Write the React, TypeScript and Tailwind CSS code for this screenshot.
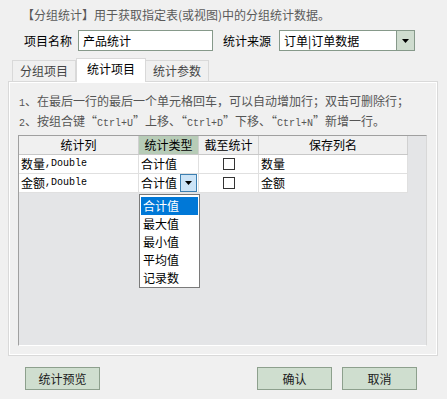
import React from "react";

const FONT = { fontFamily: '"Noto Sans CJK SC", "Liberation Sans", sans-serif' };
const MONO = { fontFamily: '"Liberation Mono", "Noto Sans CJK SC", monospace' };

function Arrow() {
  return (
    <svg width="7" height="4" viewBox="0 0 7 4">
      <path d="M0 0 H7 L3.5 4 Z" fill="#000" />
    </svg>
  );
}

function Mono({ children }: { children: React.ReactNode }) {
  return (
    <span className="text-[10px] leading-none" style={MONO}>
      {children}
    </span>
  );
}

export default function App() {
  return (
    <div
      className="relative w-[447px] h-[399px] bg-[#f0f0f0] text-[12px] text-black overflow-hidden"
      style={FONT}
    >
      {/* title */}
      <div className="pt-[8px] pl-[22px] h-[22px] leading-[14px] text-[#5a5a5a] whitespace-nowrap">
        【分组统计】用于获取指定表(或视图)中的分组统计数据。
      </div>

      {/* name / source row */}
      <div className="mt-[8px] flex items-center h-[21px] pl-[24px] text-[12px] whitespace-nowrap">
        <span className="w-[48px] leading-[21px]">项目名称</span>
        <div className="ml-[6px] w-[135px] h-[21px] bg-white border border-[#86998a] flex items-center pl-[4px]">
          产品统计
        </div>
        <span className="ml-[10px] w-[48px] leading-[21px]">统计来源</span>
        <div className="ml-[8px] w-[136px] h-[21px] bg-white border border-[#86998a] flex items-center">
          <span className="flex-1 pl-[4px]">订单|订单数据</span>
          <div className="w-[18px] h-full border-l border-[#86998a] bg-[#cfdccf] flex items-center justify-center">
            <Arrow />
          </div>
        </div>
      </div>

      {/* tabs */}
      <div className="mt-[7px] ml-[12px] flex items-end h-[23px] relative z-10">
        <div className="w-[64px] h-[21px] border border-b-0 border-[#d9d9d9] bg-[#f0f0f0] flex items-center justify-center text-[#444]">
          分组项目
        </div>
        <div className="w-[70px] h-[24px] -mb-px border border-b-0 border-[#d9d9d9] bg-white flex items-center justify-center pb-[3px]">
          统计项目
        </div>
        <div className="w-[63px] h-[21px] border border-b-0 border-l-0 border-[#d9d9d9] bg-[#f0f0f0] flex items-center justify-center text-[#444]">
          统计参数
        </div>
      </div>

      {/* panel */}
      <div className="ml-[8px] w-[430px] h-[275px] border border-[#d9d9d9] shadow-[inset_1px_1px_0_#ffffff,inset_-1px_-1px_0_#ffffff] bg-[#f0f0f0] flex flex-col">
        <div className="pt-[9px] pl-[10px] text-[#555] whitespace-nowrap">
          <div className="h-[20px] leading-[20px] flex items-center">
            <span>
              <Mono>1</Mono>、在最后一行的最后一个单元格回车，可以自动增加行；双击可删除行；
            </span>
          </div>
          <div className="h-[20px] leading-[20px] flex items-center">
            <span>
              <Mono>2</Mono>、按组合键“<Mono>Ctrl+U</Mono>”上移、“<Mono>Ctrl+D</Mono>”下移、“<Mono>Ctrl+N</Mono>”新增一行。
            </span>
          </div>
        </div>

        {/* grid */}
        <div className="mt-[4px] ml-[9px] w-[409px] h-[211px] border-t border-l border-[#a0a0a0] border-r border-b border-r-[#d8d8d8] border-b-[#ffffff] bg-[#e4e5e7]">
          <div className="flex h-[19px] bg-[#f0f0f0] w-[389px] border-b border-[#c8c8c8]">
            <div className="w-[120px] border-r border-[#d0d0d0] flex items-center justify-center">统计列</div>
            <div className="w-[60px] border-r border-[#d0d0d0] bg-[#b7ccb7] flex items-center justify-center">统计类型</div>
            <div className="w-[60px] border-r border-[#d0d0d0] flex items-center justify-center">截至统计</div>
            <div className="w-[149px] border-r border-[#d0d0d0] flex items-center justify-center">保存列名</div>
          </div>
          {[
            { c: "数量", n: "数量", btn: false },
            { c: "金额", n: "金额", btn: true },
          ].map((r) => (
            <div key={r.c} className="flex h-[19px] bg-white w-[389px] border-b border-[#e0e0e0] whitespace-nowrap">
              <div className="w-[120px] border-r border-[#e0e0e0] flex items-center pl-[2px]">
                {r.c}
                <Mono>,Double</Mono>
              </div>
              <div className="w-[60px] border-r border-[#e0e0e0] flex items-center pl-[2px] relative">
                合计值
                {r.btn && (
                  <div className="absolute right-[1px] top-0 w-[17px] h-[18px] bg-[#cce4f7] border border-[#3c7fb1] flex items-center justify-center">
                    <Arrow />
                  </div>
                )}
              </div>
              <div className="w-[60px] border-r border-[#e0e0e0] flex items-center justify-center">
                <div className="w-[12px] h-[12px] border border-[#333] bg-white" />
              </div>
              <div className="w-[149px] border-r border-[#e0e0e0] flex items-center pl-[2px]">{r.n}</div>
            </div>
          ))}
        </div>
      </div>

      {/* buttons */}
      <div className="mt-[11px] flex h-[23px]">
        <button className="ml-[25px] w-[75px] h-[23px] bg-[#cfdecf] border border-[#8da08d] text-[#1a1a1a]">
          统计预览
        </button>
        <button className="ml-[157px] w-[75px] h-[23px] bg-[#cfdecf] border border-[#8da08d] text-[#1a1a1a]">
          确认
        </button>
        <button className="ml-[10px] w-[75px] h-[23px] bg-[#cfdecf] border border-[#8da08d] text-[#1a1a1a]">
          取消
        </button>
      </div>

      {/* dropdown list */}
      <div className="absolute left-[139px] top-[194px] w-[61px] h-[94px] bg-white border border-[#7a7a7a] pt-[2px] px-[1px]">
        {["合计值", "最大值", "最小值", "平均值", "记录数"].map((t, i) => (
          <div
            key={t}
            className={
              "h-[18px] leading-[18px] pl-[2px] " +
              (i === 0 ? "bg-[#0078d7] text-white" : "text-black")
            }
          >
            {t}
          </div>
        ))}
      </div>
    </div>
  );
}
